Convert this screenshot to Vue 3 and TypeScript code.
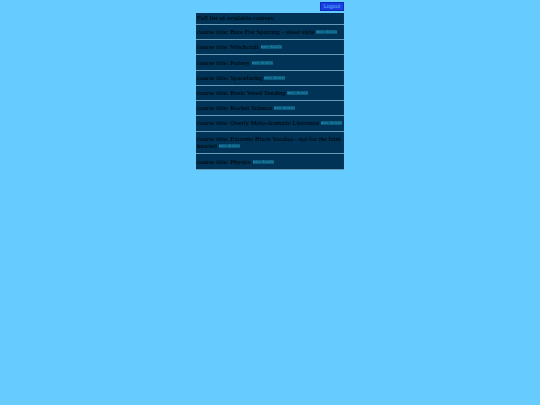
<script setup lang="ts">
interface Course { title: string }
const courses: Course[] = [
  { title: 'Bare Fist Sparring - street style' },
  { title: 'Witchcraft' },
  { title: 'Pottery' },
  { title: 'Spacefaring' },
  { title: 'Basic Weed Tending' },
  { title: 'Rocket Science' },
  { title: 'Overly Melo-dramatic Literature' },
  { title: 'Extreme Black Voodoo - not for the faint hearted' },
  { title: 'Physics' },
]
</script>

<template>
  <div class="page">
    <div class="column">
      <div class="top"><a class="logout">Logout</a></div>
      <div class="row head">Full list of available courses:</div>
      <div v-for="c in courses" :key="c.title" class="row">
        course title: {{ c.title }} <a class="more">more details</a>
      </div>
    </div>
  </div>
</template>

<style>
html, body { margin: 0; background: #66ccff; }
</style>

<style scoped>
.page {
  width: 540px;
  height: 405px;
  background: #66ccff;
  display: flex;
  justify-content: center;
  font-family: "Liberation Serif", serif;
}
.column { width: 148px; }
.top { display: flex; justify-content: flex-end; padding: 2px 0; height: 9px; }
.logout {
  box-sizing: border-box;
  width: 24px;
  height: 9px;
  background: #1a3fe0;
  border: 1px solid #0d2ac0;
  color: #5fb8f5;
  font: 5.25px/7px "Liberation Sans", sans-serif;
  letter-spacing: 0.1px;
  text-align: center;
}
.row {
  background: #003355;
  color: #000;
  font-size: 6.75px;
  line-height: 7.6px;
  padding: 3.2px 0 3.45px 1px;
  border-bottom: 1px solid #6699b3;
}
.head { padding: 1px 0 2.4px 1px; }
.more {
  display: inline-block;
  width: 21px;
  height: 4px;
  overflow: hidden;
  vertical-align: 0;
  background: #0a5a7e;
  color: #3aa5c8;
  font-size: 3px;
  line-height: 4px;
  letter-spacing: 0.55px;
  white-space: nowrap;
  text-align: center;
}
</style>
